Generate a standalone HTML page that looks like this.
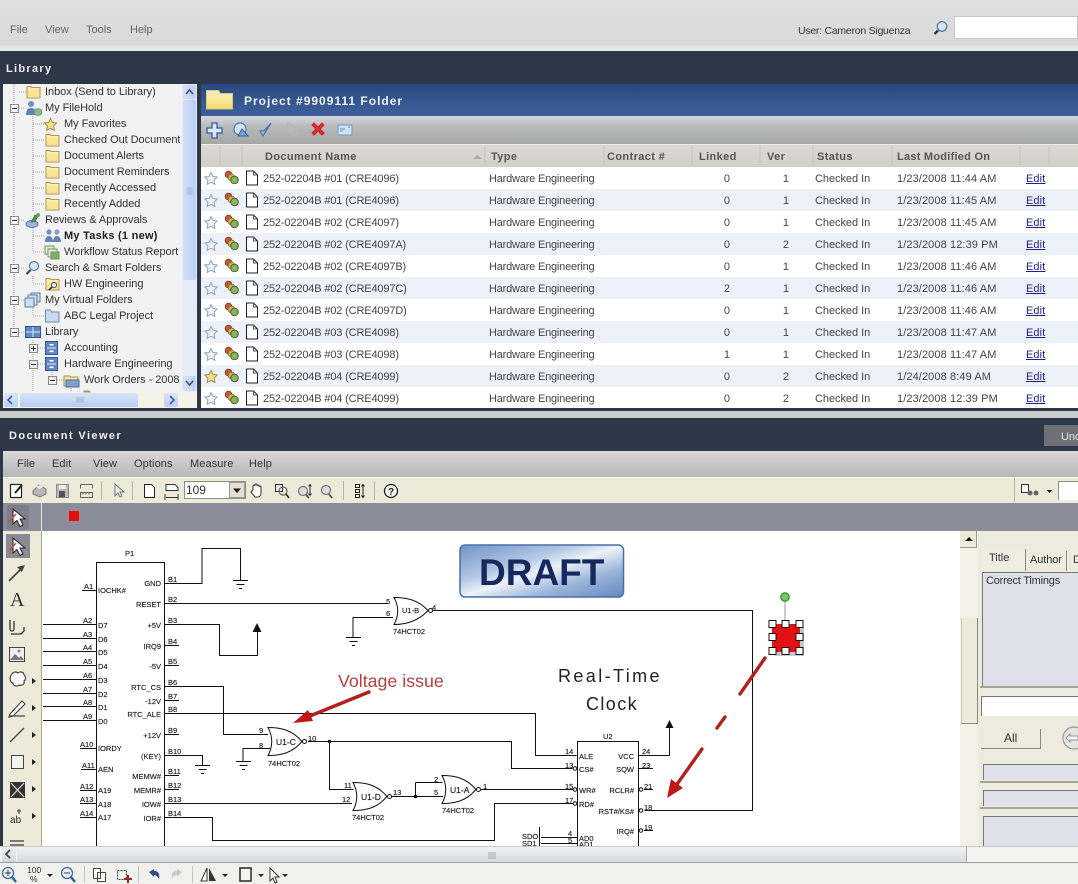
<!DOCTYPE html>
<html><head><meta charset="utf-8"><title>FileHold</title>
<style>
html,body{margin:0;padding:0;background:#2e3748}
#p{position:relative;width:1078px;height:884px;overflow:hidden;font-family:"Liberation Sans",sans-serif;font-size:11px;color:#333}
.b{position:absolute}
.t{position:absolute;white-space:nowrap;line-height:14px;letter-spacing:-.05px}
.h{position:absolute;white-space:nowrap;line-height:14px;font-weight:bold;color:#555;letter-spacing:.38px;font-size:11px;top:150px}
.m{position:absolute;white-space:nowrap;line-height:14px;color:#666;top:23px}
.v{position:absolute;white-space:nowrap;line-height:14px;color:#333;top:457px;letter-spacing:.1px}
.r{position:absolute;left:201px;width:877px;height:22px;background:#fff}
.r.e{background:#edf2fa}
.r span{position:absolute;top:5px;white-space:nowrap;line-height:14px;letter-spacing:.1px;color:#444}
.r span.n{left:62px;letter-spacing:-.15px}.r span.y{left:288px;letter-spacing:-.2px}.l{left:520px;width:12px;text-align:center}.w{left:579px;width:12px;text-align:center}.r span.s{left:614px;letter-spacing:-.05px}.d{left:696px}
.r span.x{left:825px;color:#1c1c8c;text-decoration:underline}
svg{position:absolute;left:0;top:0}
svg text{font-family:"Liberation Sans",sans-serif}
</style></head><body><div id="p">

<!-- top bar -->
<div class="b" style="left:0;top:0;width:1078px;height:51px;background:linear-gradient(#dedede,#dadada 88%,#e4e4e4 90%,#e8e9ea)"></div>
<div class="m" style="left:10px">File</div><div class="m" style="left:45px">View</div><div class="m" style="left:86px">Tools</div><div class="m" style="left:130px">Help</div>
<div class="t" style="left:798px;top:24px;color:#333;font-size:10.5px;letter-spacing:-.25px">User: Cameron Siguenza</div>
<div class="b" style="left:954px;top:16px;width:124px;height:23px;background:#fff;box-sizing:border-box;border:1px solid #c8c8c8"></div>

<!-- library panel -->
<div class="b" style="left:0;top:51px;width:1078px;height:360px;background:#2e3748"></div>
<div class="t" style="left:6px;top:62px;color:#f2f2f2;font-weight:bold;letter-spacing:1.3px">Library</div>

<!-- tree -->
<div class="b" style="left:3px;top:84px;width:194px;height:324px;background:#f2f2f2"></div>
<div class="b" style="left:3px;top:85px;width:177px;height:307px;overflow:hidden" id="tree">
<div class="t" style="left:42px;top:0px">Inbox (Send to Library)</div>
<div class="t" style="left:42px;top:16px">My FileHold</div>
<div class="t" style="left:61px;top:32px">My Favorites</div>
<div class="t" style="left:61px;top:48px">Checked Out Documents</div>
<div class="t" style="left:61px;top:64px">Document Alerts</div>
<div class="t" style="left:61px;top:80px">Document Reminders</div>
<div class="t" style="left:61px;top:96px">Recently Accessed</div>
<div class="t" style="left:61px;top:112px">Recently Added</div>
<div class="t" style="left:42px;top:128px">Reviews &amp; Approvals</div>
<div class="t" style="left:61px;top:144px;font-weight:bold;letter-spacing:.25px;color:#222">My Tasks (1 new)</div>
<div class="t" style="left:61px;top:160px">Workflow Status Report</div>
<div class="t" style="left:42px;top:176px">Search &amp; Smart Folders</div>
<div class="t" style="left:61px;top:192px">HW Engineering</div>
<div class="t" style="left:42px;top:208px">My Virtual Folders</div>
<div class="t" style="left:61px;top:224px">ABC Legal Project</div>
<div class="t" style="left:42px;top:240px">Library</div>
<div class="t" style="left:61px;top:256px">Accounting</div>
<div class="t" style="left:61px;top:272px">Hardware Engineering</div>
<div class="t" style="left:81px;top:288px">Work Orders - 2008</div>
</div>
<!-- tree scrollbars -->
<div class="b" style="left:182px;top:84px;width:15px;height:308px;background:#e6edf8"></div>
<div class="b" style="left:183px;top:85px;width:13px;height:14px;background:linear-gradient(90deg,#d5e2f8,#bcd0f4);border-radius:2px"></div>
<div class="b" style="left:183px;top:100px;width:13px;height:180px;background:linear-gradient(90deg,#d3e0f9,#b9cdf5);border-radius:2px"></div>
<div class="b" style="left:183px;top:376px;width:13px;height:15px;background:linear-gradient(90deg,#d5e2f8,#bcd0f4);border-radius:2px"></div>
<div class="b" style="left:3px;top:392px;width:194px;height:16px;background:#f5f3e8"></div>
<div class="b" style="left:4px;top:393px;width:14px;height:14px;background:linear-gradient(#dbe6fa,#bcd0f4);border-radius:2px"></div>
<div class="b" style="left:20px;top:393px;width:118px;height:14px;background:linear-gradient(#d8e4fa,#b9cdf5);border-radius:2px"></div>
<div class="b" style="left:164px;top:393px;width:14px;height:14px;background:linear-gradient(#dbe6fa,#bcd0f4);border-radius:2px"></div>

<!-- list header -->
<div class="b" style="left:201px;top:84px;width:877px;height:32px;background:linear-gradient(#28487f,#3f619b)"></div>
<div class="t" style="left:244px;top:94px;color:#eef2f8;font-weight:bold;font-size:12px;letter-spacing:1px">Project #9909111 Folder</div>
<div class="b" style="left:201px;top:116px;width:877px;height:28px;background:linear-gradient(#d5dae2,#b9bbbd 35%,#a6a6a6)"></div>
<div class="b" style="left:201px;top:144px;width:877px;height:23px;background:linear-gradient(#dcdad4,#d1cfc8);border-top:1px solid #eee;box-sizing:border-box"></div>
<div class="h" style="left:265px">Document Name</div>
<div class="h" style="left:491px">Type</div>
<div class="h" style="left:607px">Contract #</div>
<div class="h" style="left:699px">Linked</div>
<div class="h" style="left:767px">Ver</div>
<div class="h" style="left:817px">Status</div>
<div class="h" style="left:897px;letter-spacing:.25px">Last Modified On</div>

<!-- rows -->
<div class="r" style="top:167px"><span class="n">252-02204B #01 (CRE4096)</span><span class="y">Hardware Engineering</span><span class="l">0</span><span class="w">1</span><span class="s">Checked In</span><span class="d">1/23/2008 11:44 AM</span><span class="x">Edit</span></div>
<div class="r e" style="top:189px"><span class="n">252-02204B #01 (CRE4096)</span><span class="y">Hardware Engineering</span><span class="l">0</span><span class="w">1</span><span class="s">Checked In</span><span class="d">1/23/2008 11:45 AM</span><span class="x">Edit</span></div>
<div class="r" style="top:211px"><span class="n">252-02204B #02 (CRE4097)</span><span class="y">Hardware Engineering</span><span class="l">0</span><span class="w">1</span><span class="s">Checked In</span><span class="d">1/23/2008 11:45 AM</span><span class="x">Edit</span></div>
<div class="r e" style="top:233px"><span class="n">252-02204B #02 (CRE4097A)</span><span class="y">Hardware Engineering</span><span class="l">0</span><span class="w">2</span><span class="s">Checked In</span><span class="d">1/23/2008 12:39 PM</span><span class="x">Edit</span></div>
<div class="r" style="top:255px"><span class="n">252-02204B #02 (CRE4097B)</span><span class="y">Hardware Engineering</span><span class="l">0</span><span class="w">1</span><span class="s">Checked In</span><span class="d">1/23/2008 11:46 AM</span><span class="x">Edit</span></div>
<div class="r e" style="top:277px"><span class="n">252-02204B #02 (CRE4097C)</span><span class="y">Hardware Engineering</span><span class="l">2</span><span class="w">1</span><span class="s">Checked In</span><span class="d">1/23/2008 11:46 AM</span><span class="x">Edit</span></div>
<div class="r" style="top:299px"><span class="n">252-02204B #02 (CRE4097D)</span><span class="y">Hardware Engineering</span><span class="l">0</span><span class="w">1</span><span class="s">Checked In</span><span class="d">1/23/2008 11:46 AM</span><span class="x">Edit</span></div>
<div class="r e" style="top:321px"><span class="n">252-02204B #03 (CRE4098)</span><span class="y">Hardware Engineering</span><span class="l">0</span><span class="w">1</span><span class="s">Checked In</span><span class="d">1/23/2008 11:47 AM</span><span class="x">Edit</span></div>
<div class="r" style="top:343px"><span class="n">252-02204B #03 (CRE4098)</span><span class="y">Hardware Engineering</span><span class="l">1</span><span class="w">1</span><span class="s">Checked In</span><span class="d">1/23/2008 11:47 AM</span><span class="x">Edit</span></div>
<div class="r e" style="top:365px"><span class="n">252-02204B #04 (CRE4099)</span><span class="y">Hardware Engineering</span><span class="l">0</span><span class="w">2</span><span class="s">Checked In</span><span class="d">1/24/2008 8:49 AM</span><span class="x">Edit</span></div>
<div class="r" style="top:387px;height:21px"><span class="n">252-02204B #04 (CRE4099)</span><span class="y">Hardware Engineering</span><span class="l">0</span><span class="w">2</span><span class="s">Checked In</span><span class="d">1/23/2008 12:39 PM</span><span class="x">Edit</span></div>

<!-- divider -->
<div class="b" style="left:0;top:411px;width:1078px;height:7px;background:#c9cbcf"></div>

<!-- viewer -->
<div class="b" style="left:0;top:418px;width:1078px;height:33px;background:#2e3748"></div>
<div class="t" style="left:9px;top:429px;color:#f2f2f2;font-weight:bold;letter-spacing:1.4px">Document Viewer</div>
<div class="b" style="left:1044px;top:425px;width:34px;height:21px;background:#6f7076"></div>
<div class="t" style="left:1061px;top:430px;color:#e8e8e8">Unc</div>
<div class="b" style="left:0;top:451px;width:3px;height:395px;background:#2e3748"></div>
<div class="b" style="left:3px;top:451px;width:1075px;height:26px;background:linear-gradient(#d8d8d8,#b7b7b7)"></div>
<div class="v" style="left:17px">File</div><div class="v" style="left:52px">Edit</div><div class="v" style="left:93px">View</div><div class="v" style="left:134px">Options</div><div class="v" style="left:190px">Measure</div><div class="v" style="left:249px">Help</div>
<div class="b" style="left:3px;top:477px;width:1075px;height:26px;background:#ecebda;border-top:1px solid #f8f8f0;box-sizing:border-box"></div>
<div class="b" style="left:184px;top:481px;width:62px;height:18px;background:#fff;box-sizing:border-box;border:1px solid #8f8f80"></div>
<div class="t" style="left:186px;top:483px;font-size:12px">109</div>
<div class="b" style="left:229px;top:482px;width:16px;height:16px;background:#e6e4d6;border:0"></div>
<div class="b" style="left:1058px;top:481px;width:20px;height:18px;background:#fff;border-left:1px solid #8f8f80;border-top:1px solid #8f8f80"></div>
<div class="b" style="left:3px;top:503px;width:1075px;height:28px;background:#8c8d9b"></div>
<div class="b" style="left:41px;top:503px;width:1px;height:28px;background:#e6e6e6"></div>
<div class="b" style="left:3px;top:531px;width:39px;height:315px;background:#ecebda;border-right:1px solid #a9a88c;box-sizing:border-box"></div>
<div class="b" style="left:42px;top:531px;width:918px;height:315px;background:#fff"></div>
<div class="b" style="left:7px;top:505px;width:22px;height:24px;background:#7f7f8c"></div>
<div class="b" style="left:6px;top:534px;width:24px;height:24px;background:#8a8a95"></div>
<div class="b" style="left:69px;top:511px;width:10px;height:10px;background:#e21010;box-shadow:0 0 2px #f66"></div>
<div class="t" style="left:10px;top:593px;font:20px/14px 'Liberation Serif',serif;color:#333">A</div>

<!-- right panel -->
<div class="b" style="left:960px;top:531px;width:18px;height:315px;background:#f2f1e8"></div>
<div class="b" style="left:960px;top:531px;width:17px;height:17px;background:#ecebda;border-right:1px solid #999;border-bottom:1px solid #999;box-sizing:border-box"></div>
<div class="b" style="left:961px;top:618px;width:17px;height:106px;background:#ecebda;border-left:1px solid #cfcfc4;border-right:1px solid #888;border-bottom:1px solid #888;box-sizing:border-box"></div>
<div class="b" style="left:978px;top:531px;width:100px;height:315px;background:#ecebde"></div>
<div class="b" style="left:982px;top:549px;width:44px;height:22px;background:#eeeee2;border-right:1px solid #888;box-sizing:border-box"></div>
<div class="t" style="left:989px;top:551px;font-size:11px;letter-spacing:0">Title</div>
<div class="b" style="left:1027px;top:551px;width:40px;height:20px;border-right:1px solid #888;box-sizing:border-box"></div>
<div class="t" style="left:1030px;top:553px;font-size:11px;letter-spacing:-.1px">Author</div>
<div class="t" style="left:1073px;top:553px;font-size:11px">D</div>
<div class="b" style="left:982px;top:572px;width:96px;height:114px;background:#dfe0ea;border-left:1px solid #777;border-top:1px solid #777;box-sizing:border-box"></div>
<div class="t" style="left:986px;top:574px;font-size:11px;letter-spacing:-.2px">Correct Timings</div>
<div class="b" style="left:980px;top:686px;width:98px;height:2px;background:#a5a594"></div>
<div class="b" style="left:981px;top:696px;width:97px;height:20px;background:#fff;border-left:1px solid #777;border-top:1px solid #777;box-sizing:border-box"></div>
<div class="b" style="left:981px;top:729px;width:60px;height:20px;background:#ecebde;border-right:1px solid #888;border-bottom:1px solid #888;box-sizing:border-box"></div>
<div class="t" style="left:1004px;top:731px;font-size:12px">All</div>
<div class="b" style="left:983px;top:764px;width:95px;height:16px;background:#dfe0ea;border-left:1px solid #777;border-top:1px solid #777;box-sizing:border-box"></div>
<div class="b" style="left:980px;top:781px;width:98px;height:2px;background:#a5a594"></div>
<div class="b" style="left:983px;top:790px;width:95px;height:16px;background:#dfe0ea;border-left:1px solid #777;border-top:1px solid #777;box-sizing:border-box"></div>
<div class="b" style="left:980px;top:807px;width:98px;height:2px;background:#a5a594"></div>
<div class="b" style="left:983px;top:816px;width:95px;height:30px;background:#dfe0ea;border-left:1px solid #777;border-top:1px solid #777;box-sizing:border-box"></div>

<!-- main overlay SVG -->
<svg width="1078" height="884" viewBox="0 0 1078 884">
<defs>
<symbol id="fo" viewBox="0 0 15 14" width="15" height="14"><path d="M1 1.500h4l1 1h8v10.500H1z" fill="#fbe594" stroke="#b09a58"/><path d="M2 4h11" stroke="#fff6c8"/></symbol>
<symbol id="st" viewBox="0 0 15 15" width="15" height="15"><path d="M7.5 1.5l1.9 3.9 4.3.6-3.1 3 .7 4.3-3.8-2-3.8 2 .7-4.3-3.1-3 4.3-.6z" fill="#eef2f8" stroke="#8fa3bf"/></symbol>
<symbol id="sy" viewBox="0 0 15 15" width="15" height="15"><path d="M7.5 1.5l1.9 3.9 4.3.6-3.1 3 .7 4.3-3.8-2-3.8 2 .7-4.3-3.1-3 4.3-.6z" fill="#f7e08a" stroke="#a08c4a"/></symbol>
<symbol id="tl" viewBox="0 0 16 15" width="16" height="15"><circle cx="5" cy="4.500" r="3.400" fill="#c9573a" stroke="#7a3020" stroke-width=".7"/><circle cx="8" cy="7.500" r="3.400" fill="#d7b456" stroke="#7a6020" stroke-width=".7"/><circle cx="11" cy="10" r="3.800" fill="#8cb45e" stroke="#35582a" stroke-width=".9"/></symbol>
<symbol id="dc" viewBox="0 0 14 16" width="14" height="16"><path d="M1.5 1h7l4 4v10h-11z" fill="#fff" stroke="#222"/><path d="M8.5 1v4h4" fill="none" stroke="#555"/></symbol>
<symbol id="ex" viewBox="0 0 9 9" width="9" height="9"><rect x=".5" y=".5" width="8" height="8" fill="#f4f4f4" stroke="#888"/><path d="M2 4.500h5" stroke="#333"/></symbol>
<symbol id="ep" viewBox="0 0 9 9" width="9" height="9"><rect x=".5" y=".5" width="8" height="8" fill="#f4f4f4" stroke="#888"/><path d="M2 4.500h5M4.500 2v5" stroke="#333"/></symbol>
<symbol id="cab" viewBox="0 0 13 14" width="13" height="14"><rect x=".5" y=".5" width="12" height="13" fill="#5f88c4" stroke="#35568c"/><path d="M2 7h9" stroke="#dce8f8"/><rect x="4.500" y="3" width="4" height="1.600" fill="#fff"/><rect x="4.500" y="9.500" width="4" height="1.600" fill="#fff"/></symbol>
<symbol id="cur" viewBox="0 0 20 24" width="20" height="24"><path d="M5 3l0 15 4-3.500 3 6 3-1.500-3-6h5z" fill="#fff" stroke="#222"/><path d="M1 16L8 8" stroke="#c05050" stroke-width="1.500"/></symbol>
<symbol id="tri" viewBox="0 0 6 8" width="6" height="8"><path d="M1 1l4 3-4 3z" fill="#222"/></symbol>
<symbol id="gnd" viewBox="0 0 18 12" width="18" height="12" overflow="visible"><path d="M1 .5h15M4.500 4.500h8M7 8.500h3" stroke="#111" stroke-width="1" fill="none"/></symbol>
<linearGradient id="dg" x1="0" y1="0" x2="1" y2="1"><stop offset="0" stop-color="#6f93c6"/><stop offset=".35" stop-color="#b4c8e4"/><stop offset=".5" stop-color="#eef3fa"/><stop offset=".72" stop-color="#9ab5d9"/><stop offset="1" stop-color="#6787bd"/></linearGradient>
<linearGradient id="fg" x1="0" y1="0" x2="0" y2="1"><stop offset="0" stop-color="#f2ecc4"/><stop offset=".5" stop-color="#fbe79a"/><stop offset="1" stop-color="#f6d872"/></linearGradient>
</defs>

<!-- tree lines -->
<g stroke="#a8a8a8" stroke-dasharray="1 1" fill="none">
<path d="M14 84v252M19 92h7M19 108h6M33 116v96M33 124h12M33 140h12M33 156h12M33 172h12M33 188h12M33 204h12M19 220h6M33 228v24M33 236h12M33 252h12M19 268h6M33 276v8M33 284h12M19 300h6M33 308v8M33 316h12M19 332h6M33 340v52M38 348h7M38 364h7M52 372v4M57 380h7M71 388v4"/>
</g>
<use href="#fo" x="26" y="85"/>
<use href="#ex" x="10" y="104"/>
<g><circle cx="31" cy="104" r="3" fill="#6f8fc0"/><path d="M26 115c0-5 2-7 5-7s5 2 5 7z" fill="#5f84b8"/><ellipse cx="38" cy="112" rx="4" ry="3.500" fill="#8fb58a" stroke="#5c8558" stroke-width=".6"/></g>
<use href="#sy" x="43" y="117"/>
<use href="#fo" x="45" y="133"/><use href="#fo" x="45" y="149"/><use href="#fo" x="45" y="165"/><use href="#fo" x="45" y="181"/><use href="#fo" x="45" y="197"/>
<use href="#ex" x="10" y="216"/>
<g><ellipse cx="32" cy="224" rx="6" ry="3.500" fill="#9fb8d8" stroke="#5a7aa8"/><path d="M31 222l4-7 3 1-3 6z" fill="#5d8f52" stroke="#3d6a38" stroke-width=".6"/><circle cx="38" cy="215" r="2" fill="#6f9f64"/></g>
<g><circle cx="49" cy="232" r="2.600" fill="#6f8fc0"/><circle cx="57" cy="232" r="2.600" fill="#8a9fbf"/><path d="M45 242c0-4 2-6 4-6s4 2 4 6zM53 242c0-4 2-6 4-6s4 2 4 6z" fill="#5f84b8"/></g>
<g fill="#e6ecdc" stroke="#6f9a60"><rect x="45" y="246" width="9" height="8"/><rect x="48" y="249" width="9" height="8"/><rect x="51" y="252" width="8" height="7" fill="#7fb06a"/></g>
<use href="#ex" x="10" y="264"/>
<g fill="none"><circle cx="34" cy="266" r="4.500" fill="#d7e6f6" stroke="#5d7ea8" stroke-width="1.200"/><path d="M30.500 270l-4 4" stroke="#444" stroke-width="2.200"/></g>
<use href="#fo" x="45" y="277"/>
<g fill="none"><circle cx="54" cy="285" r="2.600" fill="#e8f0f8" stroke="#555"/><path d="M52 287l-3 3" stroke="#333" stroke-width="1.600"/></g>
<use href="#ex" x="10" y="296"/>
<g fill="#cfe0f2" stroke="#5d7ea0"><path d="M31 293h9v9h-9z"/><path d="M28 295h9v10h-9z"/><path d="M25 298h9v9h-9z"/></g>
<path d="M45.500 310h5l1 2h7.500v10h-13.500z" fill="#c9dcef" stroke="#6f8aa8"/>
<use href="#ex" x="10" y="328"/>
<g><rect x="25.500" y="326.500" width="15" height="11" fill="#5f88c4" stroke="#35568c"/><path d="M33 327v10M26 332h14" stroke="#dce8f8"/></g>
<use href="#ep" x="29" y="344"/><use href="#cab" x="45" y="341"/>
<use href="#ex" x="29" y="360"/><use href="#cab" x="45" y="357"/>
<use href="#ex" x="48" y="376"/>
<path d="M64 376h6l1 1h7v9H64z" fill="#f3e3a0" stroke="#a8954f"/><rect x="66" y="380" width="13" height="7" fill="#7ea2d0" stroke="#4a6c9c"/>
<path d="M84 392v-1h5l1 1z" fill="#f3e3a0" stroke="#a8954f"/>

<!-- tree scrollbar glyphs -->
<path d="M186 94l3.500-4 3.500 4" fill="none" stroke="#3a4f78" stroke-width="1.600"/>
<path d="M186 381l3.500 4 3.500-4" fill="none" stroke="#3a4f78" stroke-width="1.600"/>
<path d="M186.500 188h6M186.500 190h6M186.500 192h6M186.500 194h6" stroke="#8ea5cc" stroke-width=".8"/>
<path d="M12 396l-4 4 4 4M170 396l4 4-4 4" fill="none" stroke="#3a5fa8" stroke-width="1.600"/>
<path d="M77 397v6M79 397v6M81 397v6M83 397v6" stroke="#8ea5cc" stroke-width=".8"/>

<!-- search -->
<g fill="none"><circle cx="942" cy="26.500" r="4.800" fill="#d8e6f4" stroke="#5d7ea8" stroke-width="1.300"/><path d="M938 30.500l-3.500 3.500" stroke="#333" stroke-width="2.300"/></g>

<!-- list folder -->
<path d="M206.500 90.500h12l2 3h12v15.500h-26z" fill="url(#fg)" stroke="#d9c87c"/>
<!-- list toolbar -->
<path d="M212 123h5v5h5v5h-5v5h-5v-5h-5v-5h5z" fill="#dce8f8" stroke="#2e5e9e" stroke-width="1.300"/>
<circle cx="240" cy="129" r="6" fill="#d5e3f4" stroke="#4b7aa8" stroke-width="1.200"/><path d="M238 136l4-7 6 7z" fill="#7aa6d8" stroke="#2e5e9e"/>
<path d="M260 131l3 5 8-13-7 8z" fill="#a9c2e6" stroke="#4c6fb0" stroke-width="1.200"/>
<path d="M286 125l7 10a3 3 0 0 0 4-3l-7-9a2 2 0 0 0-3 2l6 8" fill="none" stroke="#b5b8bb" stroke-width="1.300"/>
<path d="M312 125l2-2 4 4 4-4 2 2-4 4 4 4-2 2-4-4-4 4-2-2 4-4z" fill="#d8303a" stroke="#c22" stroke-width="1"/>
<rect x="338" y="125" width="14" height="10" fill="#cfe1f3" stroke="#6d9cc8"/><path d="M340 129h5M340 131h3M348 127h2" stroke="#6d8db0"/>
<path d="M473 159l4.500-4 4.500 4z" fill="#aaa"/>
<g stroke="#c4c2ba"><path d="M220 145v21M242 145v21M485 145v21M604 145v21M692 145v21M760 145v21M813 145v21M892 145v21M1020 145v21M1049 145v21"/></g>

<!-- list row icons -->
<g>
<use href="#st" x="203.500" y="171"/><use href="#st" x="203.500" y="193"/><use href="#st" x="203.500" y="215"/><use href="#st" x="203.500" y="237"/><use href="#st" x="203.500" y="259"/><use href="#st" x="203.500" y="281"/><use href="#st" x="203.500" y="303"/><use href="#st" x="203.500" y="325"/><use href="#st" x="203.500" y="347"/><use href="#sy" x="203.500" y="369"/><use href="#st" x="203.500" y="391"/>
<use href="#tl" x="223.500" y="170"/><use href="#tl" x="223.500" y="192"/><use href="#tl" x="223.500" y="214"/><use href="#tl" x="223.500" y="236"/><use href="#tl" x="223.500" y="258"/><use href="#tl" x="223.500" y="280"/><use href="#tl" x="223.500" y="302"/><use href="#tl" x="223.500" y="324"/><use href="#tl" x="223.500" y="346"/><use href="#tl" x="223.500" y="368"/><use href="#tl" x="223.500" y="390"/>
<use href="#dc" x="245" y="170"/><use href="#dc" x="245" y="192"/><use href="#dc" x="245" y="214"/><use href="#dc" x="245" y="236"/><use href="#dc" x="245" y="258"/><use href="#dc" x="245" y="280"/><use href="#dc" x="245" y="302"/><use href="#dc" x="245" y="324"/><use href="#dc" x="245" y="346"/><use href="#dc" x="245" y="368"/><use href="#dc" x="245" y="390"/>
</g>

<!-- viewer toolbar icons -->
<path d="M10.500 484.500h11v13h-11z" fill="#fff" stroke="#222" stroke-width="1.200"/><path d="M15 493l7-8" stroke="#222" stroke-width="2"/>
<path d="M33 491l6-6 7 4v5l-6 3-7-3z" fill="#b8b8b8" stroke="#777"/><path d="M36 487l4-2 3 2-4 2z" fill="#eee"/>
<rect x="56.500" y="484.500" width="12" height="13" fill="#bcbcbc" stroke="#888"/><rect x="59" y="491" width="6" height="6" fill="#555"/><rect x="59" y="485" width="7" height="4" fill="#eee"/>
<path d="M80.500 484.500h12M80.500 497.500h12v-5h-12zM80.500 484.500v4M92.500 484.500v4M83 492.500v2M86 492.500v2M89 492.500v2" fill="none" stroke="#666"/>
<path d="M115 484v12l3-3 2 4 2-1-2-4h4z" fill="#eee" stroke="#777"/>
<path d="M144.500 484.500h7l3 3v10h-10z" fill="#fff" stroke="#222"/>
<path d="M166 484.500h9l3 3v3h-12zM166 497.500h12M165 494v6M178 494v6" fill="#fff" stroke="#333"/>
<rect x="229.500" y="482.500" width="15" height="15" fill="#e2e0d0" stroke="#999"/><path d="M233 488.500h8l-4 4.500z" fill="#111"/>
<path d="M254 490v-4a1 1 0 0 1 2 0v-1a1 1 0 0 1 2 0v1a1 1 0 0 1 2 0v1a1 1 0 0 1 2 0v6c0 2-1 4-3 4h-3l-4-5z" fill="#fff" stroke="#333" transform="translate(-1 0)"/>
<rect x="275.500" y="484.500" width="7" height="7" fill="#eee" stroke="#333"/><circle cx="283" cy="491" r="4" fill="none" stroke="#666" stroke-width="1.200"/><path d="M286 494l3 4" stroke="#333" stroke-width="1.800"/>
<circle cx="303" cy="491" r="4.500" fill="#ddd" stroke="#777" stroke-width="1.200"/><path d="M306 495l3 3" stroke="#555" stroke-width="1.800"/><path d="M310 485v10M308.500 486.500l1.500-2 1.500 2M308.500 493.500l1.500 2 1.500-2" fill="none" stroke="#333"/>
<circle cx="326" cy="490" r="4.500" fill="#ddd" stroke="#777" stroke-width="1.200"/><path d="M329 494l3 4" stroke="#555" stroke-width="1.800"/>
<path d="M355.500 484.500h4v3h-4zM355.500 489.500h4v3h-4zM355.500 494.500h4v3h-4zM363 485v12M361.500 486.500l1.500-2 1.500 2M361.500 495.500l1.500 2 1.500-2" fill="none" stroke="#222"/>
<circle cx="391" cy="491" r="6.500" fill="#f5f5f0" stroke="#222" stroke-width="1.300"/>
<text x="388" y="495" font-size="10" font-weight="bold" fill="#222">?</text>
<g stroke="#b7b59f"><path d="M101.500 481v19M132.500 481v19M343.500 481v19M374.500 481v19M1014.500 478v24"/></g>
<path d="M1021.500 484.500h7v8h-7z" fill="#fff" stroke="#333"/><circle cx="1030" cy="493" r="2.500" fill="#666"/><circle cx="1036" cy="493" r="2.500" fill="#666"/><path d="M1047 490h5l-2.500 3z" fill="#111"/>

<!-- left tool icons -->
<use href="#cur" x="8" y="506"/>
<use href="#cur" x="8" y="535"/>
<path d="M9 581l14-14" stroke="#444" stroke-width="1.600"/><path d="M25 565l-8 2 5 5z" fill="#444"/>
<path d="M10 620v9a2 2 0 0 0 4 0v-8M11 634h10l3-3v-4" fill="none" stroke="#333" stroke-width="1.300"/>
<rect x="9.500" y="647.500" width="15" height="14" fill="#eee" stroke="#444"/><path d="M10 660l5-6 4 4 2-2 3 4z" fill="#777"/><circle cx="19" cy="651" r="1.500" fill="#888"/>
<path d="M12 674c2-3 5-2 6-1 2-2 6-1 6 2 2 1 2 5 0 6 1 3-2 5-5 4-2 2-6 1-6-2-3 0-4-6-1-9z" fill="#fff" stroke="#444" stroke-width="1.200"/>
<path d="M10 714l12-13 3 3-12 12-4 1zM9 716h16" fill="#fff" stroke="#444" stroke-width="1.200"/>
<path d="M10 742l14-14" stroke="#444" stroke-width="1.300"/>
<rect x="11.500" y="755.500" width="12" height="13" fill="#f2f2ee" stroke="#444"/>
<rect x="10" y="782" width="15" height="16" fill="#333"/><path d="M11 783l13 14M24 783l-13 14" stroke="#ddd" stroke-width="1.200"/>
<text x="10" y="823" font-size="10" fill="#333">ab</text><path d="M19 809v5M17 811h4" stroke="#333"/>
<path d="M10 841h14M10 845h14" stroke="#555" stroke-width="1.500"/>
<use href="#tri" x="31" y="677"/><use href="#tri" x="31" y="704"/><use href="#tri" x="31" y="731"/><use href="#tri" x="31" y="758"/><use href="#tri" x="31" y="785"/><use href="#tri" x="31" y="812"/>

<!-- schematic -->
<g fill="none" stroke="#111" stroke-width="1">
<rect x="96.500" y="562.500" width="68" height="285"/>
<path d="M82 590.500h14M43 624.500h53M43 638.500h53M43 651.500h53M43 665.500h53M43 679.500h53M43 693.500h53M43 706.500h53M43 720.500h53M80 748.500h16M81 769.500h15M80 790.500h16M80 803.500h16M80 817.500h16"/>
<path d="M165 583.500h37v-35h38.500v32M165 603.500h223M165 624.500h54.500v31h38v-24M165 645.500h14M165 665.500h14M165 686.500h58.500v48h44.500M165 700.500h14M165 713.500h370.500v42h41M165 734.500h14M165 755.500h37.500v10M165 775.500h14M165 789.500h14M165 803.500h187M165 817.500h47.500v23h282v-37h82"/>
<path d="M270 748.500h-27v13M393 617.500h-40v20M308 741.500h203.500v27h61M329.500 741.500v48h24M391 796.500h52M415.500 782.500v14M415.500 782.500h27M481 789.500h92"/>
<path d="M433 610.500h319.500v200h-108M638 755.500h31.500v-28M638 768.500h15M644 789.500h9M644 830.500h9"/>
<rect x="577.500" y="741.500" width="61" height="120"/>
<path d="M539.500 827v19M541 837.500h36M541 843.500h36"/>
<!-- gates -->
<path d="M268 727.500c12 0 24 2 34 14-10 12-22 14-34 14 5-9 5-19 0-28z" fill="#fff"/>
<path d="M353 782.500c12 0 24 2 34 14-10 12-22 14-34 14 5-9 5-19 0-28z" fill="#fff"/>
<path d="M442 775.500c12 0 24 2 34 14-10 12-22 14-34 14 5-9 5-19 0-28z" fill="#fff"/>
<path d="M394 597.500c12 0 24 2 34 13-10 11-22 14-34 14 5-9 5-18 0-27z" fill="#fff"/>
<circle cx="304.500" cy="741.500" r="2" fill="#fff"/><circle cx="389.500" cy="796.500" r="2" fill="#fff"/><circle cx="478.500" cy="789.500" r="2" fill="#fff"/><circle cx="430.500" cy="610.500" r="2" fill="#fff"/>
<circle cx="575" cy="768.500" r="1.800" fill="#fff"/><circle cx="575" cy="789.500" r="1.800" fill="#fff"/><circle cx="575" cy="803.500" r="1.800" fill="#fff"/><circle cx="641" cy="789.500" r="1.800" fill="#fff"/><circle cx="641" cy="810.500" r="1.800" fill="#fff"/><circle cx="641" cy="830.500" r="1.800" fill="#fff"/>
</g>
<g fill="#111"><circle cx="329.500" cy="741.500" r="1.800"/><circle cx="415.500" cy="796.500" r="1.800"/>
<path d="M257 623l-4.500 9h9zM669.500 720l-4 8h8z"/></g>
<use href="#gnd" x="232" y="580"/><use href="#gnd" x="194" y="765"/><use href="#gnd" x="235" y="761"/><use href="#gnd" x="345" y="637"/>
<g font-size="7.500" fill="#222" stroke="#222" stroke-width=".15">
<text x="125" y="556">P1</text>
<text x="84" y="589">A1</text><text x="98" y="593">IOCHK#</text>
<text x="83" y="623">A2</text><text x="98" y="628">D7</text>
<text x="83" y="637">A3</text><text x="98" y="642">D6</text>
<text x="83" y="650">A4</text><text x="98" y="655">D5</text>
<text x="83" y="664">A5</text><text x="98" y="669">D4</text>
<text x="83" y="678">A6</text><text x="98" y="683">D3</text>
<text x="83" y="692">A7</text><text x="98" y="697">D2</text>
<text x="83" y="705">A8</text><text x="98" y="710">D1</text>
<text x="83" y="719">A9</text><text x="98" y="724">D0</text>
<text x="80" y="747">A10</text><text x="98" y="751">IORDY</text>
<text x="82" y="768">A11</text><text x="98" y="772">AEN</text>
<text x="80" y="789">A12</text><text x="98" y="793">A19</text>
<text x="80" y="802">A13</text><text x="98" y="807">A18</text>
<text x="80" y="816">A14</text><text x="98" y="820">A17</text>
<g text-anchor="end">
<text x="161" y="586">GND</text><text x="161" y="607">RESET</text><text x="161" y="628">+5V</text><text x="161" y="649">IRQ9</text><text x="161" y="669">-5V</text><text x="161" y="690">RTC_CS</text><text x="161" y="704">-12V</text><text x="161" y="717">RTC_ALE</text><text x="161" y="738">+12V</text><text x="161" y="759">(KEY)</text><text x="161" y="779">MEMW#</text><text x="161" y="793">MEMR#</text><text x="161" y="807">IOW#</text><text x="161" y="821">IOR#</text>
<text x="634" y="759">VCC</text><text x="634" y="772">SQW</text><text x="634" y="793">RCLR#</text><text x="634" y="814">RST#/KS#</text><text x="634" y="834">IRQ#</text>
</g>
<text x="168" y="582">B1</text><text x="168" y="602">B2</text><text x="168" y="623">B3</text><text x="168" y="644">B4</text><text x="168" y="664">B5</text><text x="168" y="685">B6</text><text x="168" y="699">B7</text><text x="168" y="712">B8</text><text x="168" y="733">B9</text><text x="168" y="754">B10</text><text x="168" y="774">B11</text><text x="168" y="788">B12</text><text x="168" y="802">B13</text><text x="168" y="816">B14</text>
<text x="386" y="604">5</text><text x="386" y="616">6</text><text x="432" y="610">4</text>
<text x="402" y="613">U1-B</text><text x="393" y="634">74HCT02</text>
<text x="259" y="733">9</text><text x="259" y="748">8</text><text x="308" y="741">10</text>
<text x="276" y="745" font-size="8.500">U1-C</text><text x="268" y="766">74HCT02</text>
<text x="344" y="788">11</text><text x="342" y="802">12</text><text x="393" y="795">13</text>
<text x="361" y="800" font-size="8.500">U1-D</text><text x="352" y="820">74HCT02</text>
<text x="434" y="782">2</text><text x="434" y="795">5</text><text x="483" y="789">1</text>
<text x="450" y="793" font-size="8.500">U1-A</text><text x="442" y="813">74HCT02</text>
<text x="603" y="739">U2</text>
<text x="565" y="754">14</text><text x="565" y="768">13</text><text x="565" y="789">15</text><text x="565" y="803">17</text><text x="568" y="836">4</text><text x="568" y="843">5</text>
<text x="579" y="759">ALE</text><text x="579" y="772">CS#</text><text x="579" y="793">WR#</text><text x="579" y="807">RD#</text><text x="579" y="841">AD0</text><text x="579" y="847">AD1</text>
<text x="642" y="754">24</text><text x="642" y="768">23</text><text x="644" y="789">21</text><text x="644" y="810">18</text><text x="644" y="830">19</text>
<text x="522" y="839">SDO</text><text x="522" y="846">SD1</text>
</g>
<text x="558" y="682" font-size="18" fill="#222" letter-spacing="2.400">Real-Time</text>
<text x="586" y="710" font-size="18" fill="#222" letter-spacing="1.400">Clock</text>

<!-- DRAFT -->
<rect x="460" y="545" width="163.500" height="52" rx="5" fill="url(#dg)" stroke="#4a6fa8" stroke-width="1.500"/>
<text x="479" y="585" font-size="37" font-weight="bold" fill="#17285f">DRAFT</text>

<!-- annotations -->
<text x="338" y="687" font-size="17.800" fill="#b4403e">Voltage issue</text>
<g stroke="#b32020" stroke-width="3.400" fill="none" stroke-linecap="round">
<path d="M369 692L305 718"/><path d="M765 658L740 694"/><path d="M725 717L717 728"/><path d="M702 749L675 787"/>
</g>
<path d="M293 723L308 710L313 721zM667 798L671 779L683 788z" fill="#c01818"/>

<!-- red shape -->
<path d="M785 601v24" stroke="#999"/>
<circle cx="785" cy="597" r="4.300" fill="#66cc66" stroke="#2a7a2a"/>
<rect x="775" y="627" width="29" height="29" fill="#c8c8cc"/>
<rect x="772" y="624" width="28" height="28" rx="2" fill="#e31212"/>
<g fill="#fff" stroke="#111"><rect x="769" y="620.500" width="7" height="7"/><rect x="782" y="620.500" width="7" height="7"/><rect x="796" y="620.500" width="7" height="7"/><rect x="769" y="633.500" width="7" height="7"/><rect x="796" y="633.500" width="7" height="7"/><rect x="769" y="647.500" width="7" height="7"/><rect x="782" y="647.500" width="7" height="7"/><rect x="796" y="647.500" width="7" height="7"/></g>

<!-- right panel glyphs -->
<path d="M965 541l4-4 4 4z" fill="#111"/>
<circle cx="1074" cy="738" r="11" fill="#e4e4e0" stroke="#9a9aa0" stroke-width="1.200"/><path d="M1066 738l4-4v2h8v4h-8v2z" fill="#f4f4f4" stroke="#999"/>
</svg>

<!-- bottom bars -->
<div class="b" style="left:0;top:846px;width:1078px;height:17px;background:#f3f3f1;border-top:1px solid #c8c8c8;border-bottom:1px solid #9f9f9f;box-sizing:border-box"></div>
<div class="b" style="left:2px;top:847px;width:14px;height:15px;background:linear-gradient(#f1f1f1,#d3d5da)"></div>
<div class="b" style="left:17px;top:847px;width:950px;height:15px;background:linear-gradient(#f3f3f5,#d7d9de);border-right:1px solid #a8a8a8;box-sizing:border-box"></div>
<div class="b" style="left:0;top:863px;width:1078px;height:21px;background:#f0f0ee"></div>
<svg width="1078" height="884" viewBox="0 0 1078 884" style="pointer-events:none">
<path d="M10 850l-4 4 4 4" fill="none" stroke="#444" stroke-width="1.800"/>
<path d="M489 852v7M491 852v7M493 852v7M495 852v7" stroke="#999" stroke-width=".8"/>
<circle cx="8" cy="873" r="5.500" fill="#e8f0f8" stroke="#3f6f9f" stroke-width="1.300"/><path d="M5 873h6M8 870v6" stroke="#333"/><path d="M12 877l4 5" stroke="#2e5e8e" stroke-width="2.400"/>
<text x="27" y="873" font-size="8.500" fill="#333">100</text><text x="30" y="882" font-size="8.500" fill="#333">%</text>
<path d="M47 874h6l-3 3z" fill="#222"/>
<circle cx="67" cy="873" r="5.500" fill="#e8f0f8" stroke="#3f6f9f" stroke-width="1.300"/><path d="M64 873h6" stroke="#333"/><path d="M71 877l4 5" stroke="#2e5e8e" stroke-width="2.400"/>
<path d="M93.500 868.500h7v10h-7zM97.500 872.500h8v9h-8z" fill="#fff" stroke="#444"/>
<path d="M117.500 870.500h9v9h-9z" fill="none" stroke="#444" stroke-dasharray="2 1"/><path d="M128 875v8M124 879h8" stroke="#a02020" stroke-width="2"/>
<path d="M149 872l5-3v2c4 0 6 2 5 8-2-3-3-4-5-4v2z" fill="#2e4f8a"/>
<path d="M182 872l-5-3v2c-4 0-6 2-5 8 2-3 3-4 5-4v2z" fill="#c8ccd2"/>
<path d="M201 881l6-13v13zM209 868l7 13h-7z" fill="#333"/><path d="M201 881l6-13v13z" fill="#fff" stroke="#333"/>
<path d="M222 874h6l-3 3z" fill="#222"/>
<rect x="240" y="868" width="11" height="13" fill="#f4f4f2" stroke="#333" stroke-width="1.600"/>
<path d="M258 874h6l-3 3z" fill="#222"/>
<path d="M270 868v13l3-3 2 5 2-1-2-5h4z" fill="#fff" stroke="#333"/>
<path d="M282 874h6l-3 3z" fill="#222"/>
<g stroke="#c4c4c2"><path d="M84.500 866v17M138.500 866v17M192.500 866v17"/></g>
</svg>
</div></body></html>
